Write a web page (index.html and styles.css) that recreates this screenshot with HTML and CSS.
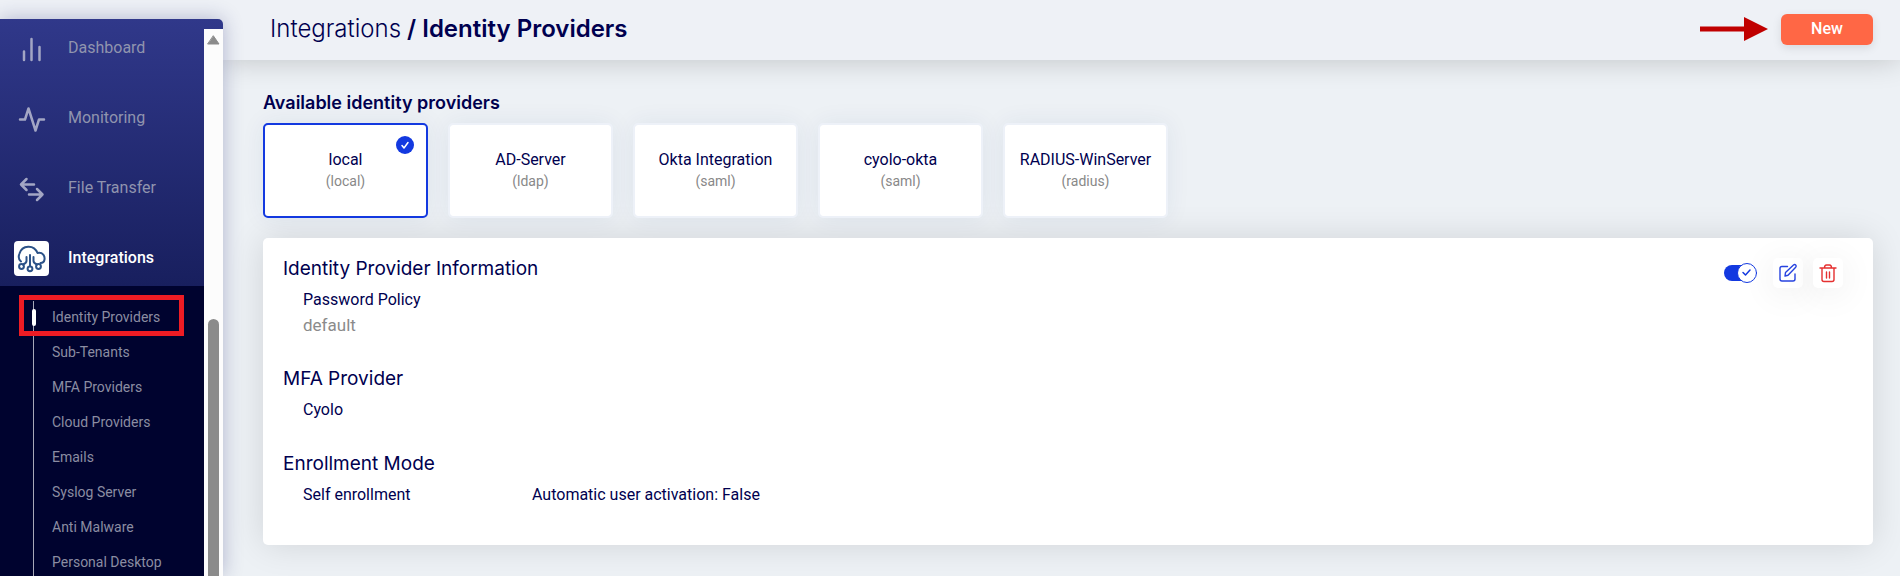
FILE: index.html
```html
<!DOCTYPE html>
<html lang="en">
<head>
    <meta charset="utf-8">
    <meta name="viewport" content="width=device-width, initial-scale=1">
    <title>Integrations / Identity Providers</title>
    <link rel="stylesheet" href="styles.css">
</head>
<body>
    <div class="layout">
        <aside class="sidebar">
            <nav class="menu">
                <a href="#" class="menu-item">
                    <svg class="menu-icon" viewBox="0 0 35 35"><path d="M10 20.500v8.500M17.500 8v21M25.500 16v13"/></svg>
                    Dashboard
                </a>
                <a href="#" class="menu-item">
                    <svg class="menu-icon" viewBox="0 0 35 35"><path d="M6 18.500h5l3.500-11 7 22 3.500-11h5"/></svg>
                    Monitoring
                </a>
                <a href="#" class="menu-item">
                    <svg class="menu-icon" viewBox="0 0 35 35"><path d="M20 13.500H7M12.500 8L7 13.500l5.500 5.500M15 23.500h13.500M23 18l5.500 5.500L23 29"/></svg>
                    File Transfer
                </a>
                <a href="#" class="menu-item active">
                    <svg class="menu-icon cloud" viewBox="0 0 35 35">
                        <path d="M7 20.500C4.500 18.500 4.500 15 5.500 12.500C8 4 20 3 23.500 12C29 11 31 15 30.500 18.500Q30 22 26.500 22"/>
                        <path d="M16 14v11M12.500 16v4q0 2-3.500 3.500M19.500 16v4q0 2 3.500 3.500"/>
                        <circle cx="7.500" cy="25.500" r="2.400"/><circle cx="16" cy="27.800" r="2.400"/><circle cx="24.500" cy="25.500" r="2.400"/>
                    </svg>
                    Integrations
                </a>
                <ul class="submenu">
                    <li class="current"><a href="#">Identity Providers</a></li>
                    <li><a href="#">Sub-Tenants</a></li>
                    <li><a href="#">MFA Providers</a></li>
                    <li><a href="#">Cloud Providers</a></li>
                    <li><a href="#">Emails</a></li>
                    <li><a href="#">Syslog Server</a></li>
                    <li><a href="#">Anti Malware</a></li>
                    <li><a href="#">Personal Desktop</a></li>
                </ul>
            </nav>
            <div class="scrollbar">
                <svg class="scroll-up" viewBox="0 0 13 10"><path d="M6.500 1L12 9H1z"/></svg>
                <div class="scroll-thumb"></div>
            </div>
        </aside>

        <div class="page">
            <header class="topbar">
                <h1><a href="#">Integrations</a> / Identity Providers</h1>
                <svg class="pointer" viewBox="0 0 68 26"><path d="M0 10.500h44V1l24 12-24 12v-9.500H0z"/></svg>
                <button type="button" class="btn-new">New</button>
            </header>

            <main class="content">
                <h2>Available identity providers</h2>
                <div class="providers">
                    <button type="button" class="provider selected">
                        <span class="name">local</span>
                        <span class="type">(local)</span>
                        <svg class="check" viewBox="0 0 18 18"><circle cx="9" cy="9" r="9"/><path d="M6 9.500l2 2.500 4-5.500"/></svg>
                    </button>
                    <button type="button" class="provider">
                        <span class="name">AD-Server</span>
                        <span class="type">(ldap)</span>
                    </button>
                    <button type="button" class="provider">
                        <span class="name">Okta Integration</span>
                        <span class="type">(saml)</span>
                    </button>
                    <button type="button" class="provider">
                        <span class="name">cyolo-okta</span>
                        <span class="type">(saml)</span>
                    </button>
                    <button type="button" class="provider">
                        <span class="name">RADIUS-WinServer</span>
                        <span class="type">(radius)</span>
                    </button>
                </div>

                <section class="panel">
                    <div class="details">
                        <h3>Identity Provider Information</h3>
                        <div class="fields">
                            <div>
                                <p>Password Policy</p>
                                <p class="value">default</p>
                            </div>
                        </div>
                        <h3>MFA Provider</h3>
                        <div class="fields">
                            <p>Cyolo</p>
                        </div>
                        <h3>Enrollment Mode</h3>
                        <div class="fields">
                            <p>Self enrollment</p>
                            <p>Automatic user activation: False</p>
                        </div>
                    </div>
                    <div class="actions">
                        <label class="toggle">
                            <input type="checkbox" checked aria-label="Enabled">
                            <svg class="knob" viewBox="0 0 20 20"><circle cx="10" cy="10" r="9.500"/><path class="tick" d="M6 9.500l2.500 2.500L13 7"/></svg>
                        </label>
                        <button type="button" class="icon-btn" aria-label="Edit">
                            <svg viewBox="0 0 20 20"><path d="M9.500 3.500H4q-2 0-2 2V16q0 2 2 2h11q2 0 2-2v-5M7 13l.5-3.500 8-7.500q1.200-1 2.200 0t0 2.200l-7.700 8z"/></svg>
                        </button>
                        <button type="button" class="icon-btn danger" aria-label="Delete">
                            <svg viewBox="0 0 20 20"><path d="M2 5h16M6.500 5q0-3 2-3h3q2 0 2 3M4 5v11.500q0 2 2 2h8q2 0 2-2V5M8.500 9v6M11.500 9v6"/></svg>
                        </button>
                    </div>
                </section>
            </main>
        </div>
    </div>
</body>
</html>
```

FILE: styles.css
```css
*, *::before, *::after {
    box-sizing: border-box;
}

body {
    margin: 0;
    background: #edf1f5;
    color: #00004f;
    font-family: Roboto, sans-serif;
    font-size: 16px;
    line-height: 20px;
}

h1, h2, h3, p, ul {
    margin: 0;
    padding: 0;
    font-weight: 400;
}

h1, h2, h3 {
    font-family: Inter, "Open Sans", sans-serif;
}

a {
    color: inherit;
    text-decoration: none;
}

button {
    border: 0;
    padding: 0;
    color: inherit;
    font: inherit;
    cursor: pointer;
}

svg {
    fill: none;
    stroke: currentColor;
    stroke-linecap: round;
    stroke-linejoin: round;
}

.layout {
    display: flex;
    height: 100vh;
    overflow: hidden;
}

/* sidebar */

.sidebar {
    display: flex;
    flex: none;
    width: 223px;
    margin-top: 19px;
    overflow: hidden;
    z-index: 2;
    border-radius: 0 5px 0 0;
    background: linear-gradient(#30388a, #181f5e 267px);
    box-shadow: 0 0 20px rgba(30, 35, 110, 0.3);
}

.menu {
    flex: 1;
    padding-top: 1px;
}

.menu-item {
    display: flex;
    align-items: center;
    gap: 19px;
    height: 56px;
    margin-bottom: 14px;
    padding-left: 14px;
    color: #9094ae;
}

.menu-icon {
    width: 35px;
    height: 35px;
    color: #a3a6c4;
    stroke-width: 2.5;
}

.menu-item.active {
    margin-bottom: 0;
    color: #fff;
    font-weight: 500;
}

.menu-icon.cloud {
    border-radius: 4px;
    background: #fff;
    color: #2c5288;
    stroke-width: 2;
}

.submenu {
    position: relative;
    height: 100%;
    padding-top: 14px;
    background: #00032f;
    color: #8b8da2;
    font-size: 14px;
    line-height: 35px;
    list-style: none;
}

.submenu::before {
    content: "";
    position: absolute;
    top: 15px;
    bottom: 0;
    left: 33px;
    width: 1px;
    background: #a6a8b8;
}

.submenu li {
    position: relative;
    padding-left: 52px;
}

.submenu .current::before {
    content: "";
    position: absolute;
    top: 9px;
    left: 32px;
    width: 4px;
    height: 17px;
    border-radius: 2px;
    background: #fff;
}

.submenu .current::after {
    content: "";
    position: absolute;
    top: -5px;
    left: 19px;
    width: 165px;
    height: 41px;
    border: 5px solid #ee1c24;
    pointer-events: none;
}

.scrollbar {
    display: flex;
    flex-direction: column;
    align-items: center;
    width: 19px;
    margin-top: 10px;
    padding-top: 6px;
    background: #fcfcfc;
}

.scroll-up {
    width: 13px;
    height: 10px;
    fill: #8b8b8b;
    color: #8b8b8b;
}

.scroll-thumb {
    flex: 1;
    width: 11px;
    margin-top: 274px;
    border-radius: 6px 6px 0 0;
    background: #8b8b8b;
}

/* page */

.page {
    flex: 1;
    min-width: 0;
}

.topbar {
    display: flex;
    align-items: center;
    height: 60px;
    padding: 0 27px 2px 47px;
    background: #eef1f6;
    box-shadow: -223px 0 0 #eef1f6, 0 0 30px rgba(0, 0, 0, 0.2);
}

h1 {
    flex: 1;
    font-size: 24px;
    font-weight: 600;
    line-height: 30px;
}

h1 a {
    font-weight: 300;
}

.pointer {
    width: 68px;
    height: 26px;
    margin-right: 13px;
    fill: #c00000;
    stroke: none;
}

.btn-new {
    width: 92px;
    height: 31px;
    border-radius: 6px;
    background: #ff6745;
    box-shadow: 0 3px 10px rgba(0, 0, 0, 0.1);
    color: #fff;
    font-weight: 500;
}

.content {
    padding: 31px 27px 0 40px;
}

h2 {
    margin-bottom: 8px;
    font-size: 18px;
    font-weight: 600;
    line-height: 24px;
}

.providers {
    display: flex;
    flex-wrap: wrap;
    gap: 20px;
    margin-bottom: 20px;
}

.provider {
    display: flex;
    flex-direction: column;
    align-items: center;
    position: relative;
    width: 165px;
    height: 95px;
    padding-top: 25px;
    border: 2px solid #edf1f8;
    border-radius: 5px;
    background: #fff;
    background-clip: padding-box;
    box-shadow: 0 0 25px rgba(30, 50, 110, 0.07);
    white-space: nowrap;
}

.provider.selected {
    border-color: #1339e0;
}

.provider .type {
    margin-top: 1px;
    color: #888;
    font-size: 14px;
}

.check {
    position: absolute;
    top: 11px;
    right: 12px;
    width: 18px;
    height: 18px;
    color: #fff;
    stroke-width: 1.5;
}

.check circle {
    fill: #1339e0;
    stroke: none;
}

.panel {
    display: flex;
    justify-content: space-between;
    padding: 20px 30px 7px 20px;
    border-radius: 5px;
    background: #fff;
    box-shadow: 0 0 35px rgba(0, 0, 0, 0.12);
}

h3 {
    font-size: 19px;
    line-height: 22px;
}

.fields {
    display: grid;
    grid-template-columns: 217px auto;
    column-gap: 12px;
    margin: 10px 0 33px 20px;
}

.value {
    margin-top: 5px;
    color: #8b8b8b;
    font-size: 17px;
}

.actions {
    display: flex;
    gap: 10px;
}

.toggle {
    display: flex;
    align-items: center;
    position: relative;
    width: 33px;
    height: 30px;
    margin-right: 6px;
}

.toggle input {
    appearance: none;
    width: 28px;
    height: 16px;
    margin: 0;
    border-radius: 8px;
    background: #1339e0;
}

.knob {
    position: absolute;
    right: 0;
    width: 20px;
    height: 20px;
    color: #1339e0;
    fill: #fff;
}

.tick {
    stroke-width: 1.5;
}

.icon-btn {
    display: grid;
    place-items: center;
    width: 30px;
    height: 30px;
    border-radius: 5px;
    background: #fff;
    box-shadow: 0 5px 35px rgba(0, 0, 0, 0.08);
    color: #2743e0;
}

.icon-btn svg {
    width: 20px;
    height: 20px;
    stroke-width: 1.4;
}

.icon-btn.danger {
    color: #e53030;
}
```
